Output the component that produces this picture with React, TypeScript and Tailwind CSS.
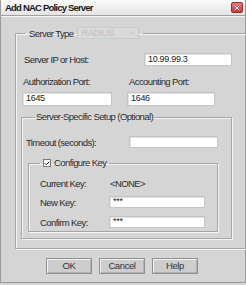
import { Check, ChevronDown, X } from 'lucide-react'

const FONT = "font-['Liberation_Sans',Arial,sans-serif]"
const GROUP = 'border border-[#a6a6a6] shadow-[1px_1px_0_#f4f4f4,inset_1px_1px_0_#f4f4f4]'
const LABEL = 'text-[9.5px] leading-[11px] tracking-[-0.6px]'

function Field({ value, className = '' }: { value?: string; className?: string }) {
  return (
    <div
      className={`bg-white border border-[#c4c4c4] shadow-[inset_1px_1px_0_#e2e2e2] pl-[3px] text-[9px] tracking-[-0.3px] text-[#222] flex items-center ${className}`}
    >
      {value}
    </div>
  )
}

function Btn({ label }: { label: string }) {
  return (
    <button className="w-[46px] h-[16px] bg-[#cdcdcd] border border-[#8f8f8f] shadow-[inset_1px_1px_0_#f2f2f2,inset_-1px_-1px_0_#b0b0b0] text-[9.5px] tracking-[-0.4px] leading-[14px] text-[#333]">
      {label}
    </button>
  )
}

export default function App() {
  return (
    <div className={`w-[246px] h-[285px] bg-[#d5d5d5] ${FONT} text-[#2a2a2a] overflow-hidden`}>
      <div className="w-[246px] h-[283px] border border-[#9a9a9a] border-t-0 flex flex-col">
        {/* title bar */}
        <div className="h-[16px] shrink-0 flex items-center justify-between pl-[4px] pr-[2px] bg-gradient-to-b from-[#fbfbfb] to-[#e4e4e4] border-b border-[#a0a0a0] shadow-[0_1px_0_#f6f6f6]">
          <span className="font-bold text-[9.5px] leading-[12px] tracking-[-0.8px] text-[#1a1a1a]">Add NAC Policy Server</span>
          <div className="w-[12px] h-[11px] rounded-[2px] bg-gradient-to-b from-[#e77a7a] to-[#c33c3c] border border-[#9b2a2a] flex items-center justify-center">
            <X size={8} strokeWidth={3} className="text-white" />
          </div>
        </div>

        {/* outer group */}
        <fieldset className={`ml-[14px] mt-[11px] w-[217px] ${GROUP} pl-[8px] pr-[17px] pb-[9px]`}>
          <legend className="ml-[1px] px-[4px] flex items-center gap-[4px]">
            <span className={LABEL}>Server Type</span>
            <div className="w-[62px] h-[12px] bg-[#dadada] border border-[#cbcbcb] flex items-center justify-between pl-[3px] pr-[2px]">
              <span className="text-[9px] leading-[10px] tracking-[-0.3px] text-[#bdbdbd]">RADIUS</span>
              <ChevronDown size={8} className="text-[#b5b5b5]" />
            </div>
          </legend>

          <div className="mt-[14px] flex items-center justify-between">
            <span className={LABEL}>Server IP or Host:</span>
            <Field value="10.99.99.3" className="w-[88px] h-[13px]" />
          </div>

          <div className="mt-[10px] grid grid-cols-[103px_88px]">
            <span className={`${LABEL} -ml-[1px]`}>Authorization Port:</span>
            <span className={`${LABEL} ml-[2px]`}>Accounting Port:</span>
            <Field value="1645" className="mt-[5px] w-[90px] h-[14px] -ml-[2px]" />
            <Field value="1646" className="mt-[5px] w-[88px] h-[14px]" />
          </div>

          {/* server-specific group */}
          <fieldset className={`-ml-[3px] mt-[5px] w-[203px] ${GROUP} pl-[4px] pr-[13px] pb-[6px]`}>
            <legend className={`ml-[9px] px-[1px] ${LABEL} leading-[12px]`}>Server-Specific Setup (Optional)</legend>
            <div className="mt-[13px] flex items-center justify-between">
              <span className={LABEL}>Timeout (seconds):</span>
              <Field className="w-[89px] h-[12px]" />
            </div>

            {/* configure key group */}
            <fieldset className={`ml-[2px] mt-[9px] w-[190px] ${GROUP} pl-[11px] pr-[12px] pb-[3px]`}>
              <legend className="ml-0 px-[3px] flex items-center gap-[3px]">
                <span className="w-[8px] h-[8px] bg-white border border-[#7a7a7a] flex items-center justify-center">
                  <Check size={7} strokeWidth={4} className="text-[#111]" />
                </span>
                <span className={`${LABEL} leading-[12px]`}>Configure Key</span>
              </legend>
              <div className="mt-[9px] flex items-center">
                <span className={`${LABEL} w-[70px]`}>Current Key:</span>
                <span className={LABEL}>&lt;NONE&gt;</span>
              </div>
              <div className="mt-[7px] flex items-center justify-between">
                <span className={LABEL}>New Key:</span>
                <Field value="***" className="w-[96px] h-[12px] text-[7px]" />
              </div>
              <div className="mt-[8px] flex items-center justify-between">
                <span className={LABEL}>Confirm Key:</span>
                <Field value="***" className="w-[96px] h-[12px] text-[7px]" />
              </div>
            </fieldset>
          </fieldset>
        </fieldset>

        <div className="mt-[9px] flex justify-center gap-[7px] pr-[2px]">
          <Btn label="OK" />
          <Btn label="Cancel" />
          <Btn label="Help" />
        </div>
      </div>
    </div>
  )
}
